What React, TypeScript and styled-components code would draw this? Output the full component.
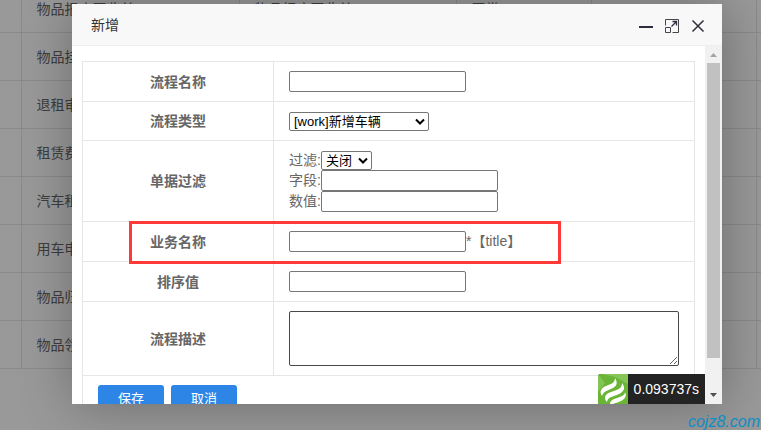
import React from "react";
import styled, { createGlobalStyle } from "styled-components";

const GlobalStyle = createGlobalStyle`
  * { box-sizing: border-box; }
  html, body, #root { height: 100%; }
  body {
    margin: 0;
    overflow: hidden;
    background: #fff;
    color: #666;
    font: 14px/20px "Liberation Sans", "Noto Sans CJK SC", sans-serif;
  }
  table { border-collapse: collapse; border-spacing: 0; }
`;

const Page = styled.div`
  display: grid;
  height: 100%;
  overflow: hidden;
  > * { grid-area: 1 / 1; min-width: 0; min-height: 0; }
`;

const ListArea = styled.div`
  display: flex;
  align-items: flex-start;
  overflow: hidden;
`;

const ListTable = styled.table`
  width: 100%;
  margin-top: -16px;
  table-layout: fixed;
`;

const ListCol = styled.col<{ $width?: number }>`
  width: ${(p) => (p.$width ? `${p.$width}px` : "auto")};
`;

const ListCell = styled.td`
  height: 48px;
  padding: 0 15px;
  border: 1px solid #e6e6e6;
  border-left-width: 0;
  white-space: nowrap;
  overflow: hidden;
  &:last-child { border-right-width: 0; }
`;

const Shade = styled.div`
  z-index: 1;
  display: grid;
  padding: 4px 39px 26px 72px;
  background: rgba(0, 0, 0, 0.4);
`;

const Dialog = styled.section`
  display: flex;
  flex-direction: column;
  min-width: 0;
  min-height: 0;
  background: #fff;
  box-shadow: 1px 1px 50px rgba(0, 0, 0, 0.3);
`;

const TitleBar = styled.header`
  display: flex;
  flex: none;
  align-items: center;
  justify-content: space-between;
  height: 42px;
  padding: 0 16px 0 19px;
  border-bottom: 1px solid #eee;
  background: #f8f8f8;
`;

const Title = styled.h1`
  margin: 0;
  color: #333;
  font-size: 14px;
  font-weight: 400;
`;

const WindowButtons = styled.div`
  display: flex;
  padding-top: 2px;
  gap: 10px;
`;

const IconButton = styled.button`
  display: block;
  width: 16px;
  height: 16px;
  padding: 0;
  border: 0;
  background: none;
  svg { display: block; }
`;

const DialogBody = styled.div`
  position: relative;
  display: flex;
  flex: 1;
  min-height: 0;
`;

const FormPane = styled.form`
  flex: 1;
  min-width: 0;
  padding: 15px 10px;
  overflow: hidden;
`;

const FormTable = styled.table`
  width: 100%;
`;

const HeadCell = styled.th`
  position: relative;
  width: 191px;
  padding: 9px 15px;
  border: 1px solid #e6e6e6;
  font-weight: 700;
`;

const FieldCell = styled.td`
  padding: 9px 15px;
  border: 1px solid #e6e6e6;
`;

const Line = styled.div<{ $height?: number }>`
  display: flex;
  align-items: flex-start;
  height: ${(p) => p.$height ?? 21}px;
`;

const TextInput = styled.input`
  width: 177px;
  height: 21px;
  padding: 1px 2px;
  border: 1px solid #767676;
  border-radius: 2px;
  background: #fff;
  font: 13px "Liberation Sans", sans-serif;
`;

const SelectWrap = styled.span<{ $width: number }>`
  position: relative;
  display: block;
  align-self: flex-end;
  width: ${(p) => p.$width}px;
  height: 19px;
  svg { position: absolute; right: 4px; top: 6px; pointer-events: none; }
`;

const Select = styled.select`
  display: block;
  width: 100%;
  height: 19px;
  padding: 0 4px;
  border: 1px solid #767676;
  border-radius: 2px;
  appearance: none;
  background: #fff;
  color: #000;
  font: 13px/17px "Liberation Sans", "Noto Sans CJK SC", sans-serif;
`;

const TextArea = styled.textarea`
  display: block;
  width: 100%;
  max-width: 390px;
  height: 55px;
  padding: 2px;
  border: 1px solid #484848;
  border-radius: 2px;
  resize: both;
`;

const Highlight = styled.span`
  position: absolute;
  z-index: 1;
  top: -1px;
  left: 46px;
  width: 432px;
  height: 43px;
  border: 3px solid #ff3838;
  pointer-events: none;
`;

const Actions = styled.div`
  display: flex;
  gap: 7px;
`;

const ActionButton = styled.button`
  height: 30px;
  padding: 0 20px 2px;
  border: 0;
  border-radius: 3px;
  background: #2d85e6;
  color: #fff;
  font: 13px/28px "Liberation Sans", "Noto Sans CJK SC", sans-serif;
`;

const ScrollTrack = styled.div`
  display: flex;
  flex: none;
  flex-direction: column;
  justify-content: space-between;
  width: 17px;
  background: #f1f1f1;
`;

const ScrollArrow = styled.svg`
  display: block;
  flex: none;
`;

const ScrollThumb = styled.div`
  flex: 1;
  margin: 0 2px 29px;
  background: #c1c1c1;
`;

const Trace = styled.div`
  position: absolute;
  right: 17px;
  bottom: 0;
  z-index: 2;
  display: flex;
  height: 30px;
  border-top-left-radius: 3px;
  overflow: hidden;
  background: #232323;
  color: #fff;
  line-height: 30px;
`;

const TraceTime = styled.span`
  padding: 0 6px;
`;

const Watermark = styled.div`
  z-index: 2;
  align-self: end;
  justify-self: end;
  padding-right: 1px;
  color: #0d8ec4;
  font-size: 16px;
  font-style: italic;
  line-height: 16px;
`;

const listRows: string[][] = [
  ["", "物品报废回收单", "物品报废回收单", "正常", "", ""],
  ["", "物品挂失单", "", "", "", ""],
  ["", "退租审批单", "", "", "", ""],
  ["", "租赁费用单", "", "", "", ""],
  ["", "汽车租赁单", "", "", "", ""],
  ["", "用车申请单", "", "", "", ""],
  ["", "物品归还单", "", "", "", ""],
  ["", "物品领用单", "", "", "", ""],
];

function Dropdown({ id, width, option }: { id: string; width: number; option: string }) {
  return (
    <SelectWrap $width={width}>
      <Select id={id}>
        <option>{option}</option>
      </Select>
      <svg width="10" height="8" viewBox="0 0 10 8" aria-hidden="true">
        <path d="M1 1.5 5 5.5 9 1.5" fill="none" stroke="#000" strokeWidth="2" />
      </svg>
    </SelectWrap>
  );
}

export default function App() {
  return (
    <Page>
      <GlobalStyle />
      <ListArea>
        <ListTable>
          <colgroup>
            <ListCol $width={21} />
            <ListCol $width={218} />
            <ListCol $width={217} />
            <ListCol $width={135} />
            <ListCol $width={165} />
            <ListCol />
          </colgroup>
          <tbody>
            {listRows.map((row, i) => (
              <tr key={i}>
                {row.map((text, j) => (
                  <ListCell key={j}>{text}</ListCell>
                ))}
              </tr>
            ))}
          </tbody>
        </ListTable>
      </ListArea>
      <Shade>
        <Dialog role="dialog" aria-labelledby="dialog-title">
          <TitleBar>
            <Title id="dialog-title">新增</Title>
            <WindowButtons>
              <IconButton type="button" aria-label="最小化">
                <svg width="16" height="16" viewBox="0 0 16 16">
                  <path d="M1 9h14" stroke="#2e2d3c" strokeWidth="2" />
                </svg>
              </IconButton>
              <IconButton type="button" aria-label="最大化">
                <svg width="16" height="16" viewBox="0 0 16 16" fill="none" stroke="#45444f">
                  <path d="M1.5 7.500v-6h13v13h-6M1.500 9.500h5v5h-5z" />
                  <path d="M7.500 8.500 12 4M8.500 3.500h4v4" stroke="#2e2d3c" strokeWidth="1.3" />
                </svg>
              </IconButton>
              <IconButton type="button" aria-label="关闭">
                <svg width="16" height="16" viewBox="0 0 16 16">
                  <path d="M2.500 2.500l11 11M13.500 2.500l-11 11" stroke="#2e2d3c" strokeWidth="1.5" />
                </svg>
              </IconButton>
            </WindowButtons>
          </TitleBar>
          <DialogBody>
            <FormPane onSubmit={(e) => e.preventDefault()}>
              <FormTable>
                <tbody>
                  <tr>
                    <HeadCell scope="row"><label htmlFor="flow-name">流程名称</label></HeadCell>
                    <FieldCell><Line><TextInput id="flow-name" /></Line></FieldCell>
                  </tr>
                  <tr>
                    <HeadCell scope="row"><label htmlFor="flow-type">流程类型</label></HeadCell>
                    <FieldCell>
                      <Line $height={20}>
                        <Dropdown id="flow-type" width={140} option="[work]新增车辆" />
                      </Line>
                    </FieldCell>
                  </tr>
                  <tr>
                    <HeadCell scope="row">单据过滤</HeadCell>
                    <FieldCell>
                      <Line $height={20}>
                        <label htmlFor="filter">过滤:</label>
                        <Dropdown id="filter" width={51} option="关闭" />
                      </Line>
                      <Line><label htmlFor="field">字段:</label><TextInput id="field" /></Line>
                      <Line><label htmlFor="value">数值:</label><TextInput id="value" /></Line>
                    </FieldCell>
                  </tr>
                  <tr>
                    <HeadCell scope="row">
                      <label htmlFor="biz-name">业务名称</label>
                      <Highlight />
                    </HeadCell>
                    <FieldCell><Line><TextInput id="biz-name" />*【title】</Line></FieldCell>
                  </tr>
                  <tr>
                    <HeadCell scope="row"><label htmlFor="sort">排序值</label></HeadCell>
                    <FieldCell><Line><TextInput id="sort" /></Line></FieldCell>
                  </tr>
                  <tr>
                    <HeadCell scope="row"><label htmlFor="desc">流程描述</label></HeadCell>
                    <FieldCell><TextArea id="desc" /></FieldCell>
                  </tr>
                  <tr>
                    <FieldCell colSpan={2}>
                      <Actions>
                        <ActionButton type="submit">保存</ActionButton>
                        <ActionButton type="button">取消</ActionButton>
                      </Actions>
                    </FieldCell>
                  </tr>
                </tbody>
              </FormTable>
            </FormPane>
            <ScrollTrack aria-hidden="true">
              <ScrollArrow width="17" height="17" viewBox="0 0 17 17">
                <path d="M5 11h7L8.500 7z" fill="#a3a3a3" />
              </ScrollArrow>
              <ScrollThumb />
              <ScrollArrow width="17" height="17" viewBox="0 0 17 17">
                <path d="M5 6h7L8.500 10z" fill="#505050" />
              </ScrollArrow>
            </ScrollTrack>
            <Trace>
              <svg width="30" height="30" viewBox="0 0 30 30" aria-hidden="true">
                <path d="M0 0h30v30H0z" fill="#6bb536" />
                <path d="M4 0h26v10L17 3z" fill="#85c657" />
                <path d="M0 0l7 9-7 9z" fill="#82c455" />
                <g fill="#fff">
                  <path d="M17 4C20 9 19 12 14 14.500C9 17 6 17 4 22C1 18 3 14 8 12C13 10 17 9 17 4z" />
                  <path d="M24 9C28 14 26 18 20 20.500C14 23 10 23 9 28C5 24 7 20 13 18C19 16 24 15 24 9z" />
                  <path d="M27 18C29 22 27 25 23 27C20 28.500 17 29 15 30H12C12 27 15 25 19 24C24 22.500 27 21 27 18z" />
                </g>
              </svg>
              <TraceTime>0.093737s</TraceTime>
            </Trace>
          </DialogBody>
        </Dialog>
      </Shade>
      <Watermark>cojz8.com</Watermark>
    </Page>
  );
}
